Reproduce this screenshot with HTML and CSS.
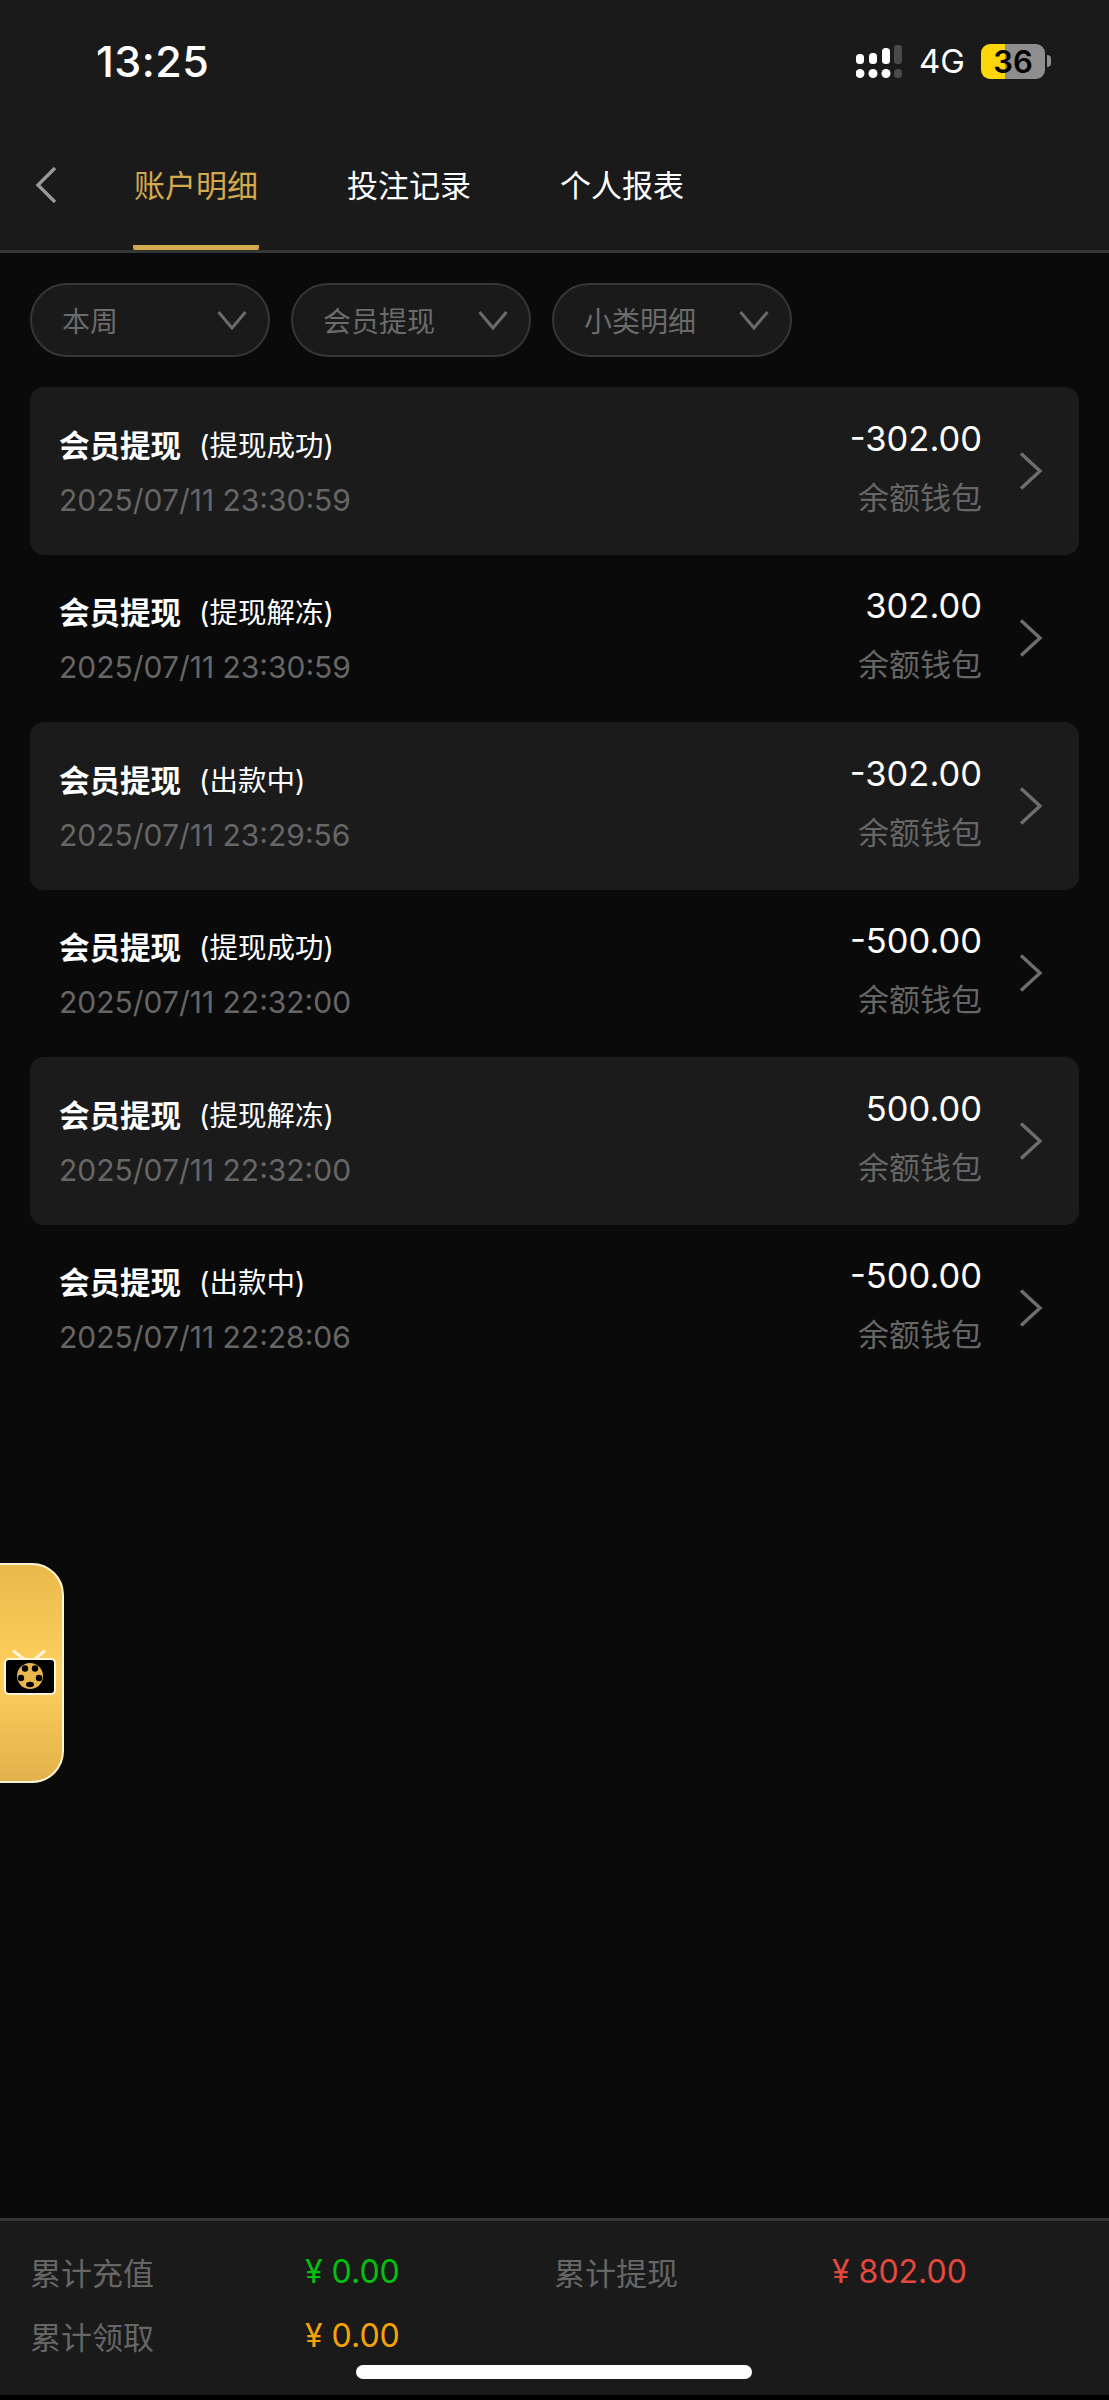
FILE: index.html
```html
<!DOCTYPE html>
<html lang="zh-CN">
<head>
    <meta charset="UTF-8" />
    <meta name="viewport" content="width=device-width, initial-scale=1" />
    <title>账户明细</title>
    <link rel="stylesheet" href="styles.css">
</head>
<body>
    <div class="page">
        <header class="top-bar">
            <div class="status-bar">
                <span class="clock">13:25</span>
                <div class="status-right">
                    <svg class="signal" width="46" height="33" viewBox="0 0 46 33">
                        <rect x="0" y="9" width="8" height="10" rx="3.5" fill="#fff"/>
                        <rect x="13" y="8" width="8" height="11" rx="3.5" fill="#fff"/>
                        <rect x="26" y="3" width="8" height="16" rx="3.5" fill="#fff"/>
                        <rect x="38" y="0" width="8" height="19" rx="3" fill="#4a4a4a"/>
                        <circle cx="4" cy="28.5" r="4.5" fill="#fff"/>
                        <circle cx="17" cy="28.5" r="4.5" fill="#fff"/>
                        <circle cx="30" cy="28.5" r="4.5" fill="#fff"/>
                        <rect x="38" y="24" width="8" height="9" rx="3.5" fill="#4a4a4a"/>
                    </svg>
                    <span class="network">4G</span>
                    <div class="battery">
                        <div class="battery-body"><span class="battery-num">36</span></div>
                        <span class="battery-tip"></span>
                    </div>
                </div>
            </div>
            <nav class="tabs">
                <svg class="back" width="26" height="36" viewBox="0 0 26 36">
                    <path d="M22 1 L5 18 L22 35" fill="none" stroke="#9a9a9a" stroke-width="3.4"/>
                </svg>
                <a class="tab active">账户明细</a>
                <a class="tab">投注记录</a>
                <a class="tab">个人报表</a>
            </nav>
        </header>

        <div class="filters">
            <div class="chip"><span>本周</span><svg class="chip-arrow" width="30" height="20" viewBox="0 0 30 20"><path d="M1.5 2 L15 18 L28.5 2" fill="none" stroke="#6b6b6b" stroke-width="3"/></svg></div>
            <div class="chip"><span>会员提现</span><svg class="chip-arrow" width="30" height="20" viewBox="0 0 30 20"><path d="M1.5 2 L15 18 L28.5 2" fill="none" stroke="#6b6b6b" stroke-width="3"/></svg></div>
            <div class="chip"><span>小类明细</span><svg class="chip-arrow" width="30" height="20" viewBox="0 0 30 20"><path d="M1.5 2 L15 18 L28.5 2" fill="none" stroke="#6b6b6b" stroke-width="3"/></svg></div>
        </div>

        <main class="records">
            <div class="record odd">
                <div class="record-left">
                    <div class="record-title"><b>会员提现</b><span>(提现成功)</span></div>
                    <div class="record-time">2025/07/11 23:30:59</div>
                </div>
                <div class="record-right">
                    <div class="record-amount">-302.00</div>
                    <div class="record-wallet">余额钱包</div>
                </div>
                <svg class="row-arrow" width="26" height="38" viewBox="0 0 26 38"><path d="M3 1.5 L22 19 L3 36.5" fill="none" stroke="#6e6e6e" stroke-width="3.4"/></svg>
            </div>
            <div class="record">
                <div class="record-left">
                    <div class="record-title"><b>会员提现</b><span>(提现解冻)</span></div>
                    <div class="record-time">2025/07/11 23:30:59</div>
                </div>
                <div class="record-right">
                    <div class="record-amount">302.00</div>
                    <div class="record-wallet">余额钱包</div>
                </div>
                <svg class="row-arrow" width="26" height="38" viewBox="0 0 26 38"><path d="M3 1.5 L22 19 L3 36.5" fill="none" stroke="#6e6e6e" stroke-width="3.4"/></svg>
            </div>
            <div class="record odd">
                <div class="record-left">
                    <div class="record-title"><b>会员提现</b><span>(出款中)</span></div>
                    <div class="record-time">2025/07/11 23:29:56</div>
                </div>
                <div class="record-right">
                    <div class="record-amount">-302.00</div>
                    <div class="record-wallet">余额钱包</div>
                </div>
                <svg class="row-arrow" width="26" height="38" viewBox="0 0 26 38"><path d="M3 1.5 L22 19 L3 36.5" fill="none" stroke="#6e6e6e" stroke-width="3.4"/></svg>
            </div>
            <div class="record">
                <div class="record-left">
                    <div class="record-title"><b>会员提现</b><span>(提现成功)</span></div>
                    <div class="record-time">2025/07/11 22:32:00</div>
                </div>
                <div class="record-right">
                    <div class="record-amount">-500.00</div>
                    <div class="record-wallet">余额钱包</div>
                </div>
                <svg class="row-arrow" width="26" height="38" viewBox="0 0 26 38"><path d="M3 1.5 L22 19 L3 36.5" fill="none" stroke="#6e6e6e" stroke-width="3.4"/></svg>
            </div>
            <div class="record odd">
                <div class="record-left">
                    <div class="record-title"><b>会员提现</b><span>(提现解冻)</span></div>
                    <div class="record-time">2025/07/11 22:32:00</div>
                </div>
                <div class="record-right">
                    <div class="record-amount">500.00</div>
                    <div class="record-wallet">余额钱包</div>
                </div>
                <svg class="row-arrow" width="26" height="38" viewBox="0 0 26 38"><path d="M3 1.5 L22 19 L3 36.5" fill="none" stroke="#6e6e6e" stroke-width="3.4"/></svg>
            </div>
            <div class="record">
                <div class="record-left">
                    <div class="record-title"><b>会员提现</b><span>(出款中)</span></div>
                    <div class="record-time">2025/07/11 22:28:06</div>
                </div>
                <div class="record-right">
                    <div class="record-amount">-500.00</div>
                    <div class="record-wallet">余额钱包</div>
                </div>
                <svg class="row-arrow" width="26" height="38" viewBox="0 0 26 38"><path d="M3 1.5 L22 19 L3 36.5" fill="none" stroke="#6e6e6e" stroke-width="3.4"/></svg>
            </div>
        </main>

        <footer class="totals">
            <div class="totals-grid">
                <span class="total-label">累计充值</span>
                <span class="total-value green">¥ 0.00</span>
                <span class="total-label">累计提现</span>
                <span class="total-value red">¥ 802.00</span>
                <span class="total-label">累计领取</span>
                <span class="total-value orange">¥ 0.00</span>
            </div>
            <div class="home-bar"></div>
        </footer>
    </div>

    <!-- floating live tv tab -->
    <div class="float-tab">
        <svg width="52" height="46" viewBox="0 0 52 46">
            <path d="M9 0.5 L20 9 M41 0.5 L31 9" stroke="#fff6dc" stroke-width="3"/>
            <rect x="1" y="9" width="50" height="35" rx="4" fill="#000" stroke="#fff6dc" stroke-width="2"/>
            <circle cx="26" cy="26" r="13" fill="#e8b64c"/>
            <circle cx="21" cy="18.5" r="3.2" fill="#000"/>
            <circle cx="31" cy="18.5" r="3.2" fill="#000"/>
            <circle cx="17" cy="28" r="3.2" fill="#000"/>
            <circle cx="35" cy="28" r="3.2" fill="#000"/>
            <ellipse cx="26" cy="34.5" rx="4" ry="2.8" fill="#000"/>
        </svg>
    </div>
</body>
</html>
```

FILE: styles.css
```css
html, body {
    margin: 0;
    height: 100%;
    background: #000;
}
body {
    font-family: 'Inter', 'Noto Sans CJK SC', sans-serif;
    color: #fff;
    position: relative;
    overflow: hidden;
}
.page {
    height: 2395px;
    display: flex;
    flex-direction: column;
    background: #0a0a0a;
}
.top-bar {
    height: 250px;
    flex: none;
    background: #1a1a1a;
    border-bottom: 3px solid #353535;
}
.status-bar {
    height: 122px;
    box-sizing: border-box;
    padding: 0 58px 0 96px;
    display: flex;
    align-items: center;
    justify-content: space-between;
}
.clock {
    font-size: 43px;
    font-weight: 500;
    letter-spacing: 0.5px;
}
.status-right {
    display: flex;
    align-items: center;
}
.signal { margin-right: 17px; }
.network {
    font-size: 33px;
    width: 62px;
}
.battery {
    display: flex;
    align-items: center;
}
.battery-body {
    width: 64px;
    height: 35px;
    border-radius: 9px;
    background: linear-gradient(90deg, #ffd60a 0%, #ffd60a 37%, #8e8e8e 37%, #8e8e8e 100%);
    display: flex;
    align-items: center;
    justify-content: center;
}
.battery-num {
    color: #000;
    font-size: 31px;
    font-weight: 600;
}
.battery-tip {
    width: 4px;
    height: 12px;
    margin-left: 2px;
    border-radius: 0 4px 4px 0;
    background: #8e8e8e;
}
.tabs {
    height: 128px;
    display: flex;
    align-items: stretch;
    padding-left: 33px;
}
.back {
    align-self: center;
    margin-right: 74px;
    margin-top: -3px;
}
.tab {
    width: 126px;
    margin-right: 87px;
    box-sizing: border-box;
    display: flex;
    align-items: center;
    justify-content: center;
    padding-bottom: 6px;
    font-size: 31px;
    color: #fff;
    white-space: nowrap;
}
.tab.active {
    color: #d3a94e;
    border-bottom: 5px solid #d3a94e;
    border-radius: 2px;
    padding-bottom: 1px;
}
.filters {
    display: flex;
    gap: 21px;
    padding: 30px;
    flex: none;
}
.chip {
    width: 240px;
    height: 74px;
    box-sizing: border-box;
    border: 2px solid #363636;
    border-radius: 37px;
    background: #1a1a1a;
    color: #6b6b6b;
    font-size: 28px;
    display: flex;
    align-items: center;
    justify-content: space-between;
    padding: 0 21px 0 30px;
}
.records {
    flex: 1;
    padding: 0 30px;
}
.record {
    height: 167.5px;
    box-sizing: border-box;
    display: flex;
    align-items: center;
    padding: 0 35px 0 29px;
    border-radius: 14px;
}
.record.odd { background: #1b1b1b; }
.record-left {
    flex: 1;
    margin-top: 3px;
}
.record-title {
    font-size: 30.5px;
    line-height: 44px;
    display: flex;
    align-items: center;
}
.record-title b { font-weight: 700; }
.record-title span {
    font-size: 28.5px;
    margin-left: 18px;
}
.record-time {
    margin-top: 11px;
    font-size: 30px;
    line-height: 42px;
    color: #666;
}
.record-right {
    text-align: right;
    margin-right: 36px;
}
.record-amount {
    font-size: 34.5px;
    line-height: 50px;
    margin-top: -8px;
}
.record-wallet {
    margin-top: 12px;
    font-size: 31px;
    line-height: 44px;
    color: #666;
}
.totals {
    height: 177px;
    flex: none;
    box-sizing: border-box;
    background: #1a1a1a;
    border-top: 3px solid #353535;
    padding: 18px 0 0 30px;
    position: relative;
}
.totals-grid {
    display: grid;
    grid-template-columns: 275px 249px 278px 1fr;
    grid-auto-rows: 64px;
    align-items: center;
}
.total-label {
    font-size: 31px;
    color: #666;
}
.total-value { font-size: 32px; }
.green { color: #00c20e; }
.red { color: #e5493d; }
.orange { color: #f5a30a; }
.home-bar {
    position: absolute;
    left: 356px;
    top: 144px;
    width: 396px;
    height: 14px;
    border-radius: 7px;
    background: #fff;
}
.float-tab {
    position: absolute;
    left: -40px;
    top: 1563px;
    width: 104px;
    height: 220px;
    box-sizing: border-box;
    padding-left: 42px;
    border: 2px solid #fff3d6;
    border-radius: 32px;
    background: linear-gradient(180deg, #eab94c 0%, #ffd05f 50%, #e3b14a 100%);
    display: flex;
    align-items: center;
}
```
